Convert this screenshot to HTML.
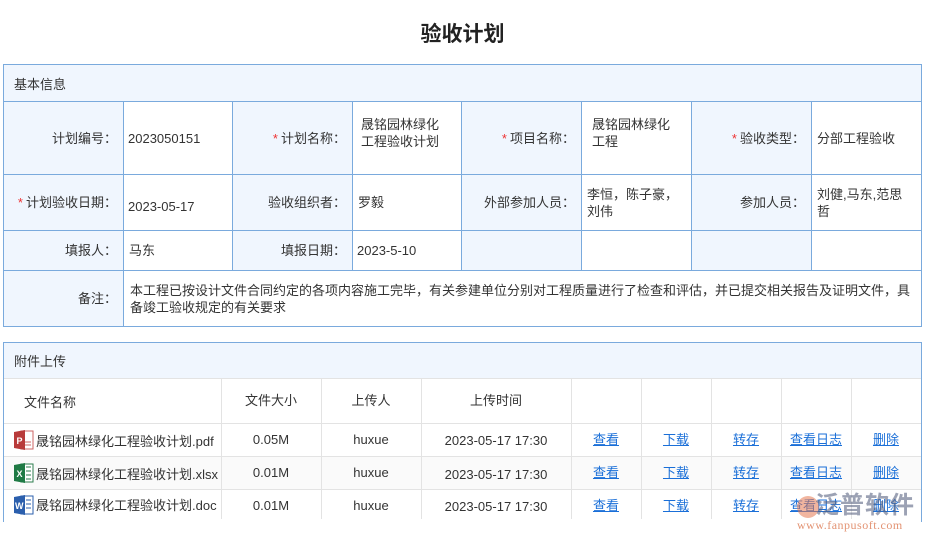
<!DOCTYPE html>
<html><head><meta charset="utf-8"><style>
*{margin:0;padding:0;box-sizing:border-box}
body{width:925px;height:541px;background:#fff;font-family:"Liberation Sans","Noto Sans CJK SC",sans-serif;font-size:13px;color:#333;position:relative;overflow:hidden}
.a{position:absolute;white-space:nowrap}
.t{left:0;width:925px;top:18px;text-align:center;font-size:21px;font-weight:bold;color:#222}
.bx{border:1px solid #7aaadd}
.hd{background:#f0f6fe}
.c{position:absolute;display:flex;align-items:center;line-height:17px}
.l{background:#f0f6fe;justify-content:flex-end;padding-right:6px;text-align:right}
.v{padding-left:4px}
.s{color:#e33;margin-right:3px}
.ln{position:absolute;background:#7aaadd}
.gl{position:absolute;background:#e3e3e3}
.tc{position:absolute;text-align:center;line-height:17px}
a{color:#1a6fd8;text-decoration:underline}
.ic{position:absolute;width:20px;height:20px}
</style></head><body>
<div class="a t">验收计划</div>

<div class="a bx" style="left:3px;top:64px;width:919px;height:263px"></div>
<div class="a hd" style="left:4px;top:65px;width:917px;height:36px"></div>
<div class="a" style="left:14px;top:74px">基本信息</div>
<div class="c l" style="left:4px;top:102px;width:119px;height:72px">计划编号：</div>
<div class="c l" style="left:233px;top:102px;width:119px;height:72px"><span class="s">*</span>计划名称：</div>
<div class="c l" style="left:462px;top:102px;width:119px;height:72px"><span class="s">*</span>项目名称：</div>
<div class="c l" style="left:692px;top:102px;width:119px;height:72px"><span class="s">*</span>验收类型：</div>
<div class="c l" style="left:4px;top:175px;width:119px;height:55px"><span class="s">*</span>计划验收日期：</div>
<div class="c l" style="left:233px;top:175px;width:119px;height:55px">验收组织者：</div>
<div class="c l" style="left:462px;top:175px;width:119px;height:55px">外部参加人员：</div>
<div class="c l" style="left:692px;top:175px;width:119px;height:55px">参加人员：</div>
<div class="c l" style="left:4px;top:231px;width:119px;height:39px">填报人：</div>
<div class="c l" style="left:233px;top:231px;width:119px;height:39px">填报日期：</div>
<div class="c l" style="left:462px;top:231px;width:119px;height:39px"></div>
<div class="c l" style="left:692px;top:231px;width:119px;height:39px"></div>
<div class="c l" style="left:4px;top:271px;width:119px;height:55px">备注：</div>
<div class="c v" style="left:124px;top:102px;width:108px;height:72px">2023050151</div>
<div class="c v" style="left:357px;top:102px;width:104px;height:72px;padding-bottom:10px">晟铭园林绿化<br>工程验收计划</div>
<div class="c v" style="left:588px;top:102px;width:103px;height:72px;padding-bottom:10px">晟铭园林绿化<br>工程</div>
<div class="c v" style="left:813px;top:102px;width:108px;height:72px">分部工程验收</div>
<div class="c v" style="left:124px;top:175px;width:108px;height:62px">2023-05-17</div>
<div class="c v" style="left:354px;top:175px;width:107px;height:55px">罗毅</div>
<div class="c v" style="left:583px;top:175px;width:108px;height:55px">李恒，陈子豪，<br>刘伟</div>
<div class="c v" style="left:813px;top:175px;width:108px;height:55px">刘健,马东,范思<br>哲</div>
<div class="c v" style="left:125px;top:231px;width:108px;height:39px">马东</div>
<div class="c v" style="left:353px;top:231px;width:108px;height:39px">2023-5-10</div>
<div class="c v" style="left:126px;top:271px;width:794px;height:55px">本工程已按设计文件合同约定的各项内容施工完毕，有关参建单位分别对工程质量进行了检查和评估，并已提交相关报告及证明文件，具备竣工验收规定的有关要求</div>
<div class="ln" style="left:4px;top:101px;width:917px;height:1px"></div>
<div class="ln" style="left:4px;top:174px;width:917px;height:1px"></div>
<div class="ln" style="left:4px;top:230px;width:917px;height:1px"></div>
<div class="ln" style="left:4px;top:270px;width:917px;height:1px"></div>
<div class="ln" style="left:123px;top:101px;width:1px;height:225px"></div>
<div class="ln" style="left:232px;top:101px;width:1px;height:169px"></div>
<div class="ln" style="left:352px;top:101px;width:1px;height:169px"></div>
<div class="ln" style="left:461px;top:101px;width:1px;height:169px"></div>
<div class="ln" style="left:581px;top:101px;width:1px;height:169px"></div>
<div class="ln" style="left:691px;top:101px;width:1px;height:169px"></div>
<div class="ln" style="left:811px;top:101px;width:1px;height:169px"></div>

<div class="a" style="left:3px;top:342px;width:919px;height:180px;border:1px solid #7aaadd;border-bottom:none"></div>
<div class="a hd" style="left:4px;top:343px;width:917px;height:35px"></div>
<div class="a" style="left:14px;top:351px">附件上传</div>
<div class="a" style="left:4px;top:456px;width:917px;height:33px;background:#fafafa"></div>
<div class="gl" style="left:4px;top:378px;width:917px;height:1px"></div>
<div class="gl" style="left:4px;top:423px;width:917px;height:1px"></div>
<div class="gl" style="left:4px;top:456px;width:917px;height:1px"></div>
<div class="gl" style="left:4px;top:489px;width:917px;height:1px"></div>
<div class="gl" style="left:221px;top:378px;width:1px;height:141px"></div>
<div class="gl" style="left:321px;top:378px;width:1px;height:141px"></div>
<div class="gl" style="left:421px;top:378px;width:1px;height:141px"></div>
<div class="gl" style="left:571px;top:378px;width:1px;height:141px"></div>
<div class="gl" style="left:641px;top:378px;width:1px;height:141px"></div>
<div class="gl" style="left:711px;top:378px;width:1px;height:141px"></div>
<div class="gl" style="left:781px;top:378px;width:1px;height:141px"></div>
<div class="gl" style="left:851px;top:378px;width:1px;height:141px"></div>
<div class="a" style="left:24px;top:392px">文件名称</div>
<div class="tc" style="left:221px;width:100px;top:392px">文件大小</div>
<div class="tc" style="left:321px;width:100px;top:392px">上传人</div>
<div class="tc" style="left:421px;width:150px;top:392px">上传时间</div>

<svg class="ic" style="left:14px;top:430px" viewBox="0 0 20 20"><rect x="7" y="1" width="12" height="18" fill="#fff" stroke="#c66" stroke-width="1"/><line x1="10" y1="12" x2="17" y2="12" stroke="#c66"/><line x1="10" y1="15" x2="17" y2="15" stroke="#c66"/><polygon points="0,2 11,0 11,20 0,18" fill="#b83a3a"/><text x="2.5" y="14" font-size="9" font-weight="bold" fill="#fff" font-family="Liberation Sans">P</text></svg>
<svg class="ic" style="left:14px;top:463px" viewBox="0 0 20 20"><rect x="7" y="1" width="12" height="18" fill="#fff" stroke="#2e7d4f"/><line x1="12" y1="4" x2="17" y2="4" stroke="#2e7d4f"/><line x1="12" y1="8" x2="17" y2="8" stroke="#2e7d4f"/><line x1="12" y1="12" x2="17" y2="12" stroke="#2e7d4f"/><line x1="12" y1="16" x2="17" y2="16" stroke="#2e7d4f"/><polygon points="0,2 11,0 11,20 0,18" fill="#1f7a45"/><text x="2.5" y="14" font-size="9" font-weight="bold" fill="#fff" font-family="Liberation Sans">X</text></svg>
<svg class="ic" style="left:14px;top:495px" viewBox="0 0 20 20"><rect x="7" y="1" width="12" height="18" fill="#fff" stroke="#2b5fad"/><line x1="12" y1="5" x2="17" y2="5" stroke="#2b5fad"/><line x1="12" y1="9" x2="17" y2="9" stroke="#2b5fad"/><line x1="12" y1="13" x2="17" y2="13" stroke="#2b5fad"/><polygon points="0,2 11,0 11,20 0,18" fill="#2b5fad"/><text x="1" y="14" font-size="9" font-weight="bold" fill="#fff" font-family="Liberation Sans">W</text></svg>

<div class="a" style="left:36px;top:433px;line-height:17px">晟铭园林绿化工程验收计划.pdf</div>
<div class="a" style="left:36px;top:466px;line-height:17px">晟铭园林绿化工程验收计划.xlsx</div>
<div class="a" style="left:36px;top:497px;line-height:17px">晟铭园林绿化工程验收计划.doc</div>

<div class="tc" style="left:221px;width:100px;top:431px">0.05M</div>
<div class="tc" style="left:221px;width:100px;top:464px">0.01M</div>
<div class="tc" style="left:221px;width:100px;top:497px">0.01M</div>
<div class="tc" style="left:321px;width:100px;top:431px">huxue</div>
<div class="tc" style="left:321px;width:100px;top:464px">huxue</div>
<div class="tc" style="left:321px;width:100px;top:497px">huxue</div>
<div class="tc" style="left:421px;width:150px;top:432px">2023-05-17 17:30</div>
<div class="tc" style="left:421px;width:150px;top:466px">2023-05-17 17:30</div>
<div class="tc" style="left:421px;width:150px;top:498px">2023-05-17 17:30</div>

<div class="tc" style="left:571px;width:70px;top:431px"><a>查看</a></div>
<div class="tc" style="left:641px;width:70px;top:431px"><a>下载</a></div>
<div class="tc" style="left:711px;width:70px;top:431px"><a>转存</a></div>
<div class="tc" style="left:781px;width:70px;top:431px"><a>查看日志</a></div>
<div class="tc" style="left:851px;width:70px;top:431px"><a>删除</a></div>
<div class="tc" style="left:571px;width:70px;top:464px"><a>查看</a></div>
<div class="tc" style="left:641px;width:70px;top:464px"><a>下载</a></div>
<div class="tc" style="left:711px;width:70px;top:464px"><a>转存</a></div>
<div class="tc" style="left:781px;width:70px;top:464px"><a>查看日志</a></div>
<div class="tc" style="left:851px;width:70px;top:464px"><a>删除</a></div>
<div class="tc" style="left:571px;width:70px;top:497px"><a>查看</a></div>
<div class="tc" style="left:641px;width:70px;top:497px"><a>下载</a></div>
<div class="tc" style="left:711px;width:70px;top:497px"><a>转存</a></div>
<div class="tc" style="left:781px;width:70px;top:497px"><a>查看日志</a></div>
<div class="tc" style="left:851px;width:70px;top:497px"><a>删除</a></div>

<div class="a" style="left:797px;top:496px;width:22px;height:22px;border-radius:50%;background:rgba(230,120,80,0.55)"></div>
<div class="a" style="left:815px;top:492px;font-size:24px;line-height:28px;font-weight:bold;color:rgba(90,100,130,0.6);letter-spacing:1px">泛普软件</div>
<div class="a" style="left:797px;top:518px;font-size:12px;line-height:14px;color:rgba(220,120,80,0.8);font-family:'Liberation Serif',serif;letter-spacing:0.5px">www.fanpusoft.com</div>
</body></html>
